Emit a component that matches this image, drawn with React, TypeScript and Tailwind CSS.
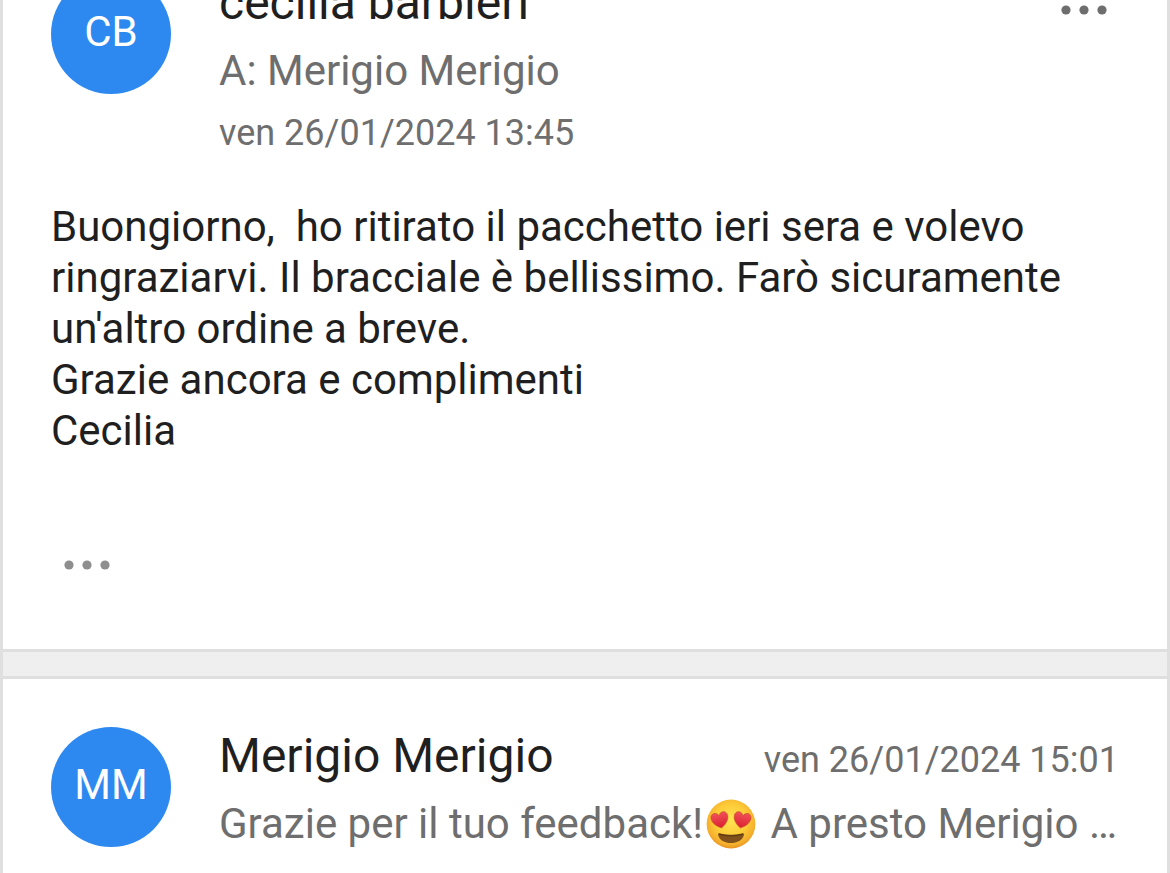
type AvatarProps = { initials: string };

function Avatar({ initials }: AvatarProps) {
  return (
    <div className="flex size-[120px] shrink-0 items-center justify-center rounded-full bg-[#2d89ef] pb-1 text-[42px] leading-[52px] text-white">
      {initials}
    </div>
  );
}

function Dots() {
  return (
    <svg width="46" height="10" viewBox="0 0 46 10" fill="currentColor" aria-hidden="true">
      <circle cx="5" cy="5" r="4.6" />
      <circle cx="23" cy="5" r="4.6" />
      <circle cx="41" cy="5" r="4.6" />
    </svg>
  );
}

const HEART =
  "M0 8 C-4 6 -8.4 2 -8.4 -3 C-8.4 -8.6 -1.6 -9 0 -4.2 C1.6 -9 8.4 -8.6 8.4 -3 C8.4 2 4 6 0 8 Z";

function HeartEyes() {
  return (
    <svg
      width="50"
      height="50"
      viewBox="0 0 50 50"
      role="img"
      aria-label="heart eyes"
      className="mr-1 ml-[3px] shrink-0"
    >
      <defs>
        <radialGradient id="face" cx="0.5" cy="0.42" r="0.6">
          <stop offset="0" stopColor="#ffe352" />
          <stop offset="0.55" stopColor="#fdcb38" />
          <stop offset="0.85" stopColor="#f4ae2c" />
          <stop offset="1" stopColor="#e58a20" />
        </radialGradient>
        <linearGradient id="heart" x1="0" y1="0" x2="0" y2="1">
          <stop offset="0" stopColor="#f2515a" />
          <stop offset="1" stopColor="#d91f30" />
        </linearGradient>
      </defs>
      <circle cx="25" cy="25" r="24.4" fill="url(#face)" />
      <path d={HEART} transform="translate(14 21) rotate(-12)" fill="url(#heart)" stroke="#c4442a" strokeWidth="0.6" />
      <path d={HEART} transform="translate(36 21) rotate(12)" fill="url(#heart)" stroke="#c4442a" strokeWidth="0.6" />
      <path d="M12 35.4 Q12 34 14 34.4 Q25 37 36 34.4 Q38 34 38 35.4 C37 41 31 44 25 44 C19 44 13 41 12 35.4 Z" fill="#80511a" />
      <path d="M13 35.2 Q25 38.4 37 35.2" fill="none" stroke="#5f3a10" strokeWidth="1.2" />
    </svg>
  );
}

export default function App() {
  return (
    <div className="flex h-screen flex-col overflow-hidden border-x-[3px] border-[#dfdfdf] bg-white font-[Roboto,sans-serif] text-[#1f1f1f]">
      {/* opened message, scrolled a little past its top */}
      <article className="-mt-[26px] shrink-0 px-12 pb-[79px]">
        <header className="flex gap-12">
          <Avatar initials="CB" />
          <div className="min-w-0 flex-1 pt-px">
            <h2 className="text-[48px] leading-[56px]">cecilia barbieri</h2>
            <p className="mt-[14px] text-[42px] leading-[52px] text-[#6e6e6e]">A: Merigio Merigio</p>
            <p className="mt-[14px] text-[36px] leading-[44px] text-[#6e6e6e]">ven 26/01/2024 13:45</p>
          </div>
          <button type="button" aria-label="Altre azioni" className="mt-[31px] mr-3 h-[10px] text-[#6e6e6e]">
            <Dots />
          </button>
        </header>

        <div className="mt-[46px] text-[42px] leading-[51px]">
          <p>
            Buongiorno,&nbsp; ho ritirato il pacchetto ieri sera e volevo ringraziarvi. Il bracciale è
            bellissimo. Farò sicuramente un'altro ordine a breve.
          </p>
          <p>Grazie ancora e complimenti</p>
          <p>Cecilia</p>
        </div>

        <button type="button" aria-label="Mostra testo citato" className="mt-[104px] ml-[13px] block text-[#8e8e8e]">
          <Dots />
        </button>
      </article>

      <div className="h-[30px] shrink-0 border-y-[3px] border-[#dfdfdf] bg-[#efefef]" />

      {/* reply, collapsed */}
      <article className="flex flex-1 gap-12 px-12 pt-12">
        <Avatar initials="MM" />
        <div className="min-w-0 flex-1 pt-px">
          <div className="flex items-baseline justify-between">
            <h2 className="text-[48px] leading-[56px]">Merigio Merigio</h2>
            <time className="text-[36px] leading-[44px] text-[#6e6e6e]">ven 26/01/2024 15:01</time>
          </div>
          <p className="mt-[14px] flex items-center text-[42px] leading-[52px] whitespace-pre text-[#6e6e6e]">
            <span>Grazie per il tuo feedback!</span>
            <HeartEyes />
            <span> A presto Merigio …</span>
          </p>
        </div>
      </article>
    </div>
  );
}
